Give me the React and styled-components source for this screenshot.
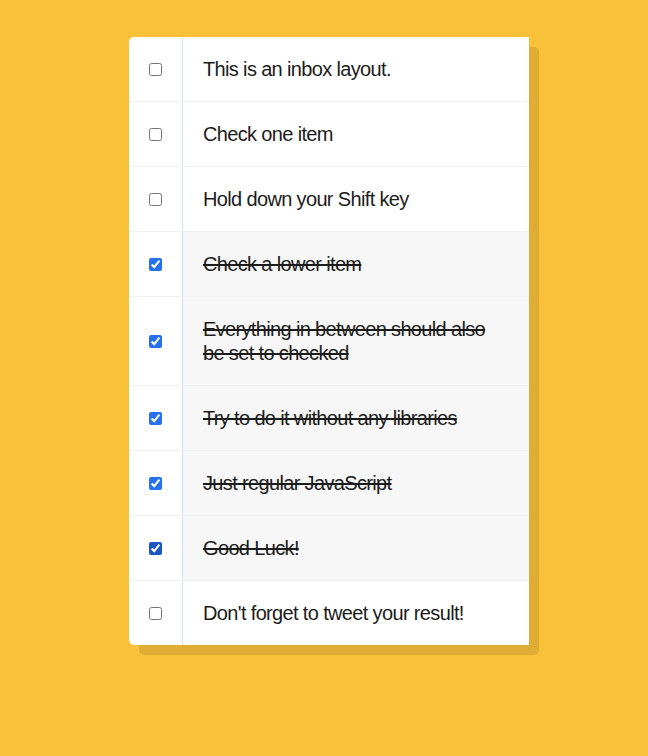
import { useState } from 'react';
import styled, { createGlobalStyle } from 'styled-components';

const GlobalStyle = createGlobalStyle`
  html, body {
    margin: 0;
    background: #f9c03a;
    font-family: "Liberation Sans", Arial, sans-serif;
  }
`;

const Page = styled.div`
  padding: 37px 0 0 10px;
  min-height: 700px;
`;

const Inbox = styled.div`
  width: 400px;
  margin: 0 auto;
  background: white;
  border-radius: 5px;
  box-shadow: 10px 10px 0 rgba(0, 0, 0, 0.1);
`;

const Item = styled.div`
  display: flex;
  align-items: center;
  border-bottom: 1px solid #f1f1f1;
  &:last-child {
    border-bottom: 0;
  }
`;

const Box = styled.input`
  margin: 20px;
  width: 13px;
  height: 13px;
  accent-color: ${props => props.focused ? '#1d55c4' : '#2671f0'};
`;

const Text = styled.p`
  margin: 0;
  padding: 20px;
  flex: 1;
  align-self: stretch;
  display: flex;
  align-items: center;
  font-size: 20px;
  line-height: 24px;
  font-weight: 300;
  letter-spacing: -0.65px;
  color: #1c1c1c;
  border-left: 1px solid #d1e2ff;
  background: ${props => props.done ? '#f7f7f7' : 'white'};
  text-decoration: ${props => props.done ? 'line-through' : 'none'};
  text-decoration-thickness: 2px;
`;

const initial = [
  { text: 'This is an inbox layout.', done: false },
  { text: 'Check one item', done: false },
  { text: 'Hold down your Shift key', done: false },
  { text: 'Check a lower item', done: true },
  { text: 'Everything in between should also be set to checked', done: true },
  { text: 'Try to do it without any libraries', done: true },
  { text: 'Just regular JavaScript', done: true },
  { text: 'Good Luck!', done: true },
  { text: "Don't forget to tweet your result!", done: false },
];

function App() {
  let [items, setItems] = useState(initial);
  let [last, setLast] = useState(7);

  return (
    <Page>
      <GlobalStyle />
      <Inbox>
        {items.map((item, i) => (
          <Item key={i}>
            <Box
              type="checkbox"
              checked={item.done}
              focused={i === last}
              onChange={() => {
                setItems(items.map((it, j) => j === i ? { ...it, done: !it.done } : it));
                setLast(i);
              }}
            />
            <Text done={item.done}>{item.text}</Text>
          </Item>
        ))}
      </Inbox>
    </Page>
  );
}

export default App;
